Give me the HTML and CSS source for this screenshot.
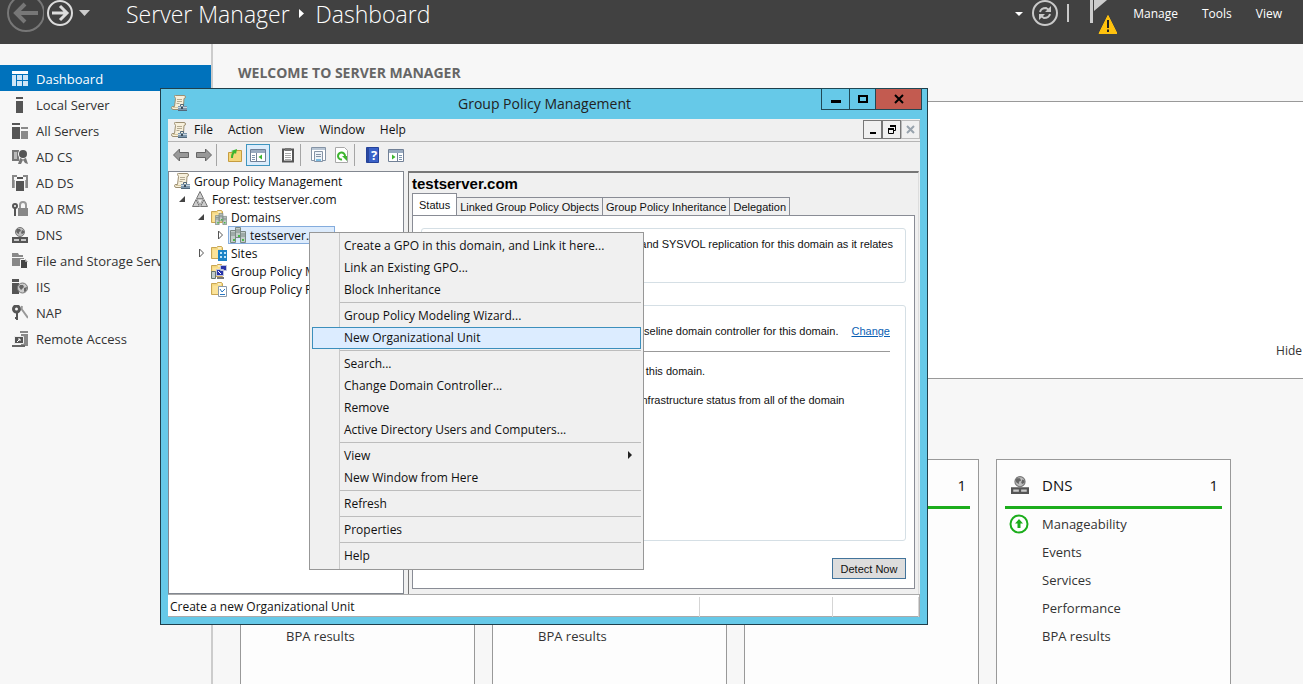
FILE: index.html
```
<!DOCTYPE html>
<html lang="en">
<head>
    <meta charset="UTF-8">
    <meta name="viewport" content="width=device-width, initial-scale=1.0">
    <title>Server Manager</title>
    <link rel="stylesheet" href="styles.css">
</head>
<body>
    <!-- shared icons -->
    <svg class="sprite" aria-hidden="true">
        <symbol id="i-gpm" viewBox="0 0 16 16">
            <path d="M3.500 1.500 Q3 .5 4.500 .5 H13 Q14.500 .5 14.500 2 Q14.500 3.500 13 3.500 L12.500 11 Q12.500 14.500 10 14.500 H2 Q.5 14.500 .5 12.500 Q.5 11.500 2 11.500 H3.500 L4.500 3.500 Z" fill="#f7f0dc" stroke="#9c8f72"/>
            <path d="M6 4.500h5M6 6.500h5M5.500 8.500h3" stroke="#b5ab92"/>
            <path d="M2 12.500h5" stroke="#d6c89f"/>
            <rect x="7" y="11" width="9" height="5" fill="#7e98ad"/>
            <path d="M9.500 11V9.500h3V11" fill="none" stroke="#52687a"/>
            <path d="M7 15.500h9" stroke="#52687a"/>
            <path d="M7 12.500h9" stroke="#c7d5df"/>
            <rect x="10" y="12" width="2" height="2" fill="#3c4c58"/>
        </symbol>
        <symbol id="i-dns" viewBox="0 0 16 16">
            <circle cx="8" cy="5" r="4.500" fill="#bdbdbd" stroke="#777"/>
            <path d="M5 2l3 0 1 2-2 1v2l-2-1-1-2zM10 3l2 1v2l-2 1-1-1z" fill="#666"/>
            <path d="M0 10h16v6H0z" fill="#555"/>
            <path d="M2 12h5v2H2zM9 12h5v2H9z" fill="#c9c9c9"/>
        </symbol>
        <symbol id="i-folder" viewBox="0 0 16 16">
            <path d="M.5 2.500h5l1-1h4l1 1v11H.5z" fill="#f3d77f" stroke="#c9a654"/>
            <path d="M1.500 4.500h9v8.500h-9z" fill="#fbe39a"/>
            <path d="M7 3h3" stroke="#fff"/>
        </symbol>
        <symbol id="i-towers" viewBox="0 0 16 16">
            <path d="M5.500 .5h5v10h-5zM.5 3.500h5v12h-5zM10.500 4.500h5v11h-5z" fill="#c3cdcb" stroke="#7b8884"/>
            <path d="M6 3h4M6 5h4M1 6h4M1 8h4M11 7h4M11 9h4" stroke="#7b8884"/>
            <path d="M3 12h2v2H3zM12 12h2v2h-2zM8 8h2v2H8z" fill="#4cb84a"/>
        </symbol>
        <symbol id="i-up" viewBox="0 0 20 20">
            <circle cx="10" cy="10" r="8.500" fill="#fff" stroke="#1cad1c" stroke-width="2"/>
            <path d="M10 5l4 4.500h-2.500V14h-3V9.500H6z" fill="#1cad1c"/>
        </symbol>
    </svg>

    <header class="topbar">
        <button class="nav-button" aria-label="Back">
            <svg width="44" height="34"><circle cx="26" cy="13" r="18" fill="none" stroke="#777" stroke-width="2"/><path d="M38 13H16M25 4l-9 9 9 9" fill="none" stroke="#777" stroke-width="4"/></svg>
        </button>
        <button class="nav-button" aria-label="Forward">
            <svg width="32" height="34"><circle cx="16" cy="13" r="12" fill="none" stroke="#dcdcdc" stroke-width="2"/><path d="M8 13h15M16 6l7 7-7 7" fill="none" stroke="#dcdcdc" stroke-width="3"/></svg>
        </button>
        <button class="nav-button" aria-label="History">
            <svg width="16" height="34"><path d="M3 10h11l-5.500 6z" fill="#ccc"/></svg>
        </button>
        <h1 class="breadcrumb">
            Server Manager
            <svg width="26" height="28" viewBox="0 0 26 28"><path d="M9 9l5 4.500-5 4.500z" fill="#fff"/></svg>
            Dashboard
        </h1>
        <div class="top-actions">
            <button class="nav-button" aria-label="Refresh options"><svg width="16" height="34"><path d="M4 12h8l-4 4z" fill="#fff"/></svg></button>
            <button class="nav-button" aria-label="Refresh">
                <svg width="32" height="34"><circle cx="18" cy="13" r="12" fill="none" stroke="#c9c9c9" stroke-width="2"/><path d="M13 12q1-4 6-4l3 2M23 14q-1 4-6 4l-3-2" fill="none" stroke="#c9c9c9" stroke-width="2"/><path d="M24 6v6h-6zM12 20v-6h6z" fill="#c9c9c9"/></svg>
            </button>
            <span class="divider"></span>
            <button class="nav-button" aria-label="Notifications">
                <svg width="48" height="40"><path d="M21 0h3v23h-3zM25 0h13L25 11z" fill="#ccc"/><path d="M24.500 1v7" stroke="#414141"/><path d="M39 15.500l9 18H30z" fill="#ffc20e" stroke="#ffc20e" stroke-linejoin="round"/><path d="M39 20v8M39 29.500v2.500" stroke="#222" stroke-width="2"/></svg>
            </button>
            <nav class="top-menu">
                <button>Manage</button>
                <button>Tools</button>
                <button>View</button>
            </nav>
        </div>
    </header>

    <div class="layout">
        <nav class="sidebar">
            <a href="#" class="active"><svg class="icon"><path d="M0 0h16v3H0z" fill="#fff"/><path d="M0 4h4v11H0zM5 4h5v5H5zM11 4h5v5h-5zM5 10h5v5H5zM11 10h5v5h-5z" fill="#cfe6f7"/></svg>Dashboard</a>
            <a href="#"><svg class="icon"><path d="M4 0h7v2H4zM4 4h7v12H4z" fill="#555"/></svg>Local Server</a>
            <a href="#"><svg class="icon"><path d="M0 0h8v2H0zM0 4h8v12H0z" fill="#555"/><path d="M9 4h7v2H9zM9 8h7v8H9z" fill="#8a8a8a"/></svg>All Servers</a>
            <a href="#"><svg class="icon"><path d="M1 2h5v9H1z" fill="#bbb" stroke="#777" stroke-width="2"/><path d="M8 9h2l1 2 1-2h2l2 6-3-1-2-3-2 4-3 0z" fill="#777"/><circle cx="11" cy="5" r="5" fill="#f7f7f7"/><circle cx="11" cy="5" r="4" fill="#555"/></svg>AD CS</a>
            <a href="#"><svg class="icon"><path d="M0 0h5v2H2v11H0zM11 0h5v13h-2V2h-3z" fill="#888"/><path d="M2 5h1v8H2zM13 5h1v8h-1z" fill="#aaa"/><path d="M5 2h6v2H5zM4 6h8v10H4z" fill="#555"/></svg>AD DS</a>
            <a href="#"><svg class="icon"><path d="M8 7V4q0-3 3-3t3 3v3" fill="none" stroke="#999" stroke-width="2"/><path d="M6 7h10v8H6z" fill="#888"/><circle cx="3" cy="5" r="2" fill="none" stroke="#555" stroke-width="2"/><path d="M3 7v8" stroke="#555" stroke-width="2"/></svg>AD RMS</a>
            <a href="#"><svg class="icon"><use href="#i-dns"/></svg>DNS</a>
            <a href="#"><svg class="icon"><path d="M0 0h6l1 2h4v2H0zM0 5h12v8H0z" fill="#888"/><path d="M8.500 6.500h5l2 2v7h-7z" fill="#444" stroke="#f7f7f7"/><path d="M13 6v3h3z" fill="#999"/></svg>File and Storage Services</a>
            <a href="#"><svg class="icon"><path d="M0 0h7v3H0zM0 4h7v11H0z" fill="#555"/><circle cx="10.500" cy="9" r="5" fill="#ccc" stroke="#777"/><path d="M8 6l3 0 1 2-3 3-2-3zM12 9l3-1-1 4-2 1z" fill="#666"/></svg>IIS</a>
            <a href="#"><svg class="icon"><circle cx="4.500" cy="4" r="3" fill="none" stroke="#555" stroke-width="3"/><path d="M5 7v8M4 13h-1" stroke="#555" stroke-width="2"/><path d="M10 1q-1 4 1 5l5 7" fill="none" stroke="#999" stroke-width="2"/></svg>NAP</a>
            <a href="#"><svg class="icon"><path d="M8 0h8v2H8zM9 3h7v12H9z" fill="#888"/><path d="M2.500 5.500h9v7h-9z" fill="#555" stroke="#eee"/><path d="M0 14h13v2H0z" fill="#666"/><path d="M5 11l3-3M6 8h2v2" fill="none" stroke="#fff"/></svg>Remote Access</a>
        </nav>

        <main class="content">
            <h2 class="welcome-title">WELCOME TO SERVER MANAGER</h2>
            <section class="welcome-panel">
                <button class="hide-button">Hide</button>
            </section>
            <section class="cards">
                <article class="card">
                    <h3><span>AD CS</span><span>1</span></h3>
                    <ul>
                        <li><svg class="status"><use href="#i-up"/></svg>Manageability</li>
                        <li>Events</li>
                        <li>Services</li>
                        <li>Performance</li>
                        <li>BPA results</li>
                    </ul>
                </article>
                <article class="card">
                    <h3><span>AD DS</span><span>1</span></h3>
                    <ul>
                        <li><svg class="status"><use href="#i-up"/></svg>Manageability</li>
                        <li>Events</li>
                        <li>Services</li>
                        <li>Performance</li>
                        <li>BPA results</li>
                    </ul>
                </article>
                <article class="card">
                    <h3><span>AD RMS</span><span>1</span></h3>
                    <ul>
                        <li><svg class="status"><use href="#i-up"/></svg>Manageability</li>
                        <li>Events</li>
                        <li>Services</li>
                        <li>Performance</li>
                    </ul>
                </article>
                <article class="card">
                    <h3><svg class="card-icon"><use href="#i-dns"/></svg><span>DNS</span><span>1</span></h3>
                    <ul>
                        <li><svg class="status"><use href="#i-up"/></svg>Manageability</li>
                        <li>Events</li>
                        <li>Services</li>
                        <li>Performance</li>
                        <li>BPA results</li>
                    </ul>
                </article>
            </section>
        </main>
    </div>

    <section class="window" aria-label="Group Policy Management">
        <div class="titlebar">
            <svg class="icon"><use href="#i-gpm"/></svg>
            <h2>Group Policy Management</h2>
            <div class="window-buttons">
                <button aria-label="Minimize"><svg width="12" height="12"><path d="M1 7h10v3H1z"/></svg></button>
                <button aria-label="Maximize"><svg width="12" height="12"><path d="M2 3h8v6H2z" fill="none" stroke="#000" stroke-width="2"/></svg></button>
                <button class="close" aria-label="Close"><svg width="12" height="12"><path d="M2 2l8 8M10 2l-8 8" stroke="#000" stroke-width="2"/></svg></button>
            </div>
        </div>

        <div class="client">
            <div class="menubar">
                <svg class="icon"><use href="#i-gpm"/></svg>
                <button>File</button>
                <button>Action</button>
                <button>View</button>
                <button>Window</button>
                <button>Help</button>
                <div class="mdi-buttons">
                    <button aria-label="Minimize child"><svg width="10" height="10"><path d="M2 7h6v2H2z"/></svg></button>
                    <button aria-label="Restore child"><svg width="10" height="10"><path d="M3.500 .5h5v5H7M1.500 4.500h5v4h-5z" fill="none" stroke="#000"/><path d="M3 1h6M1 4h6" stroke="#000" stroke-width="2"/></svg></button>
                    <button aria-label="Close child" disabled><svg width="10" height="10"><path d="M1 1l7 7M8 1L1 8" stroke="#98a3ad" stroke-width="2"/></svg></button>
                </div>
            </div>

            <div class="toolbar">
                <button aria-label="Back"><svg class="icon"><path d="M.5 8l6-6v3.500h9v5h-9V14z" fill="#999" stroke="#666"/></svg></button>
                <button aria-label="Forward"><svg class="icon"><path d="M15.500 8l-6-6v3.500h-9v5h9V14z" fill="#999" stroke="#666"/></svg></button>
                <span class="tool-divider"></span>
                <button aria-label="Up one level"><svg class="icon"><path d="M1.500 5.500h6l1-2h6v11h-13z" fill="#f5d67a" stroke="#c69c3f"/><path d="M4 11q0-5 2-6L4 4l6-2-1 5-1-1Q6 7 6 11z" fill="#3db52f"/></svg></button>
                <button class="pressed" aria-label="Console tree"><svg class="icon"><path d="M.5 2.500h15v12H.5z" fill="#fff" stroke="#718096"/><path d="M1 4.500h14" stroke="#9aabc0" stroke-width="3"/><path d="M6.500 6v8" stroke="#718096"/><path d="M2 8.500h3M2 10.500h3M2 12.500h3" stroke="#7d94ad"/><path d="M12 7.500v5L8.500 10z" fill="#3db52f"/></svg></button>
                <button aria-label="Paste"><svg class="icon"><path d="M3 2.500h10v12H3z" fill="#fff" stroke="#555" stroke-width="2"/><path d="M5 6.500h6M5 8.500h6M5 10.500h6M5 12.500h6" stroke="#aaa"/><path d="M5 1h6v3H5z" fill="#777"/></svg></button>
                <span class="tool-divider"></span>
                <button aria-label="Properties"><svg class="icon"><path d="M.5 .5h14v13H.5z" fill="#fff" stroke="#8593a5"/><path d="M1 2h13" stroke="#b9c6d4" stroke-width="2"/><path d="M3.500 4.500h8v10h-8z" fill="#eef3f8" stroke="#8593a5"/><path d="M5 7.500h5M5 9.500h5" stroke="#8593a5"/><path d="M5 13h5" stroke="#7bbbe0" stroke-width="2"/></svg></button>
                <button aria-label="Refresh"><svg class="icon"><path d="M1.500 .5h9l3 3v12h-12z" fill="#fff" stroke="#a8a8a8"/><path d="M8 12.500A3.500 3.500 0 1 1 11 9" fill="none" stroke="#3db52f" stroke-width="2"/><path d="M8 9h5v5z" fill="#3db52f"/></svg></button>
                <span class="tool-divider"></span>
                <button aria-label="Help"><svg class="icon"><path d="M1.500 .5h12v15h-12z" fill="#3b62c8" stroke="#24429a"/><path d="M2 1h2v14H2z" fill="#2a489f"/><text x="9" y="13" class="help-mark">?</text></svg></button>
                <button aria-label="Action pane"><svg class="icon"><path d="M.5 2.500h15v12H.5z" fill="#fff" stroke="#718096"/><path d="M1 4.500h14" stroke="#9aabc0" stroke-width="3"/><path d="M9.500 6v8" stroke="#718096"/><path d="M11 8.500h3M11 10.500h3M11 12.500h3" stroke="#7d94ad"/><path d="M4 7.500v5L7.500 10z" fill="#3db52f"/></svg></button>
            </div>

            <div class="panes">
                <ul class="tree">
                    <li class="root"><svg class="icon"><use href="#i-gpm"/></svg>Group Policy Management</li>
                    <li class="level-1"><svg class="twisty"><path d="M1 8h6V2z" fill="#444"/></svg><svg class="icon"><path d="M8 .5l3.500 7h-7zM4 8.500l3.500 7h-7zM12 8.500l3.500 7h-7z" fill="#ccc" stroke="#777"/><path d="M5 8h6l-3 6z" fill="#eee" stroke="#999"/></svg>Forest: testserver.com</li>
                    <li class="level-2"><svg class="twisty"><path d="M1 8h6V2z" fill="#444"/></svg><svg class="icon"><use href="#i-folder"/><use href="#i-towers" x="4" y="4" width="12" height="12"/></svg>Domains</li>
                    <li class="level-3"><svg class="twisty"><path d="M2.500 1l4 4-4 4z" fill="#fff" stroke="#555"/></svg><span class="selected"><svg class="icon"><use href="#i-towers"/></svg>testserver.com</span></li>
                    <li class="level-2"><svg class="twisty"><path d="M2.500 1l4 4-4 4z" fill="#fff" stroke="#555"/></svg><svg class="icon"><use href="#i-folder"/><path d="M7 5h9v11H7z" fill="#1c83c6"/><path d="M9 7h2v2H9zM13 7h2v2h-2zM9 11h2v2H9zM13 11h2v2h-2z" fill="#bfe5fa"/></svg>Sites</li>
                    <li class="level-2"><svg class="twisty"></svg><svg class="icon"><use href="#i-folder"/><path d="M.5 8.500h4v7h-4z" fill="#c3cdcb" stroke="#66736f"/><path d="M9.500 2.500h6v5h-6zM5.500 6.500h7v6h-7z" fill="#2733a8" stroke="#c0c4d8"/><path d="M6 15h7" stroke="#777" stroke-width="2"/><path d="M7 8l3 3" stroke="#fff"/></svg>Group Policy Modeling</li>
                    <li class="level-2"><svg class="twisty"></svg><svg class="icon"><use href="#i-folder"/><path d="M7.500 5.500h8v10h-8z" fill="#fff" stroke="#8b9aab"/><path d="M9 8l2 3 3-3M9 13.500h5" fill="none" stroke="#2a78c2"/></svg>Group Policy Results</li>
                </ul>

                <div class="details">
                    <h3>testserver.com</h3>
                    <div class="tabs" role="tablist">
                        <button class="tab current" role="tab">Status</button>
                        <button class="tab" role="tab">Linked Group Policy Objects</button>
                        <button class="tab" role="tab">Group Policy Inheritance</button>
                        <button class="tab" role="tab">Delegation</button>
                    </div>
                    <div class="tab-page">
                        <div class="group about">
                            <p>This page shows the status of Active Directory and SYSVOL replication for this domain as it relates<br>to Group Policy.</p>
                        </div>
                        <div class="group result">
                            <p class="baseline"><span>DC.testserver.com is the baseline domain controller for this domain.</span><a href="#">Change</a></p>
                            <p>No Infrastructure Status information exists for this domain.</p>
                            <p>Click the Detect Now button below to gather infrastructure status from all of the domain<br>controllers in this domain.</p>
                        </div>
                        <button class="detect">Detect Now</button>
                    </div>
                </div>
            </div>

            <div class="statusbar">
                <span>Create a new Organizational Unit</span>
                <span></span>
                <span></span>
            </div>
        </div>

        <div class="context-menu" role="menu">
            <button role="menuitem">Create a GPO in this domain, and Link it here...</button>
            <button role="menuitem">Link an Existing GPO...</button>
            <button role="menuitem">Block Inheritance</button>
            <hr>
            <button role="menuitem">Group Policy Modeling Wizard...</button>
            <button role="menuitem" class="hot">New Organizational Unit</button>
            <hr>
            <button role="menuitem">Search...</button>
            <button role="menuitem">Change Domain Controller...</button>
            <button role="menuitem">Remove</button>
            <button role="menuitem">Active Directory Users and Computers...</button>
            <hr>
            <button role="menuitem">View<svg width="6" height="8"><path d="M1 0l4 4-4 4z" fill="#222"/></svg></button>
            <button role="menuitem">New Window from Here</button>
            <hr>
            <button role="menuitem">Refresh</button>
            <hr>
            <button role="menuitem">Properties</button>
            <hr>
            <button role="menuitem">Help</button>
        </div>
    </section>
</body>
</html>
```
FILE: styles.css
```
* {
    box-sizing: border-box;
}

body {
    margin: 0;
    height: 100vh;
    display: flex;
    flex-direction: column;
    overflow: hidden;
    position: relative;
    background: #f7f7f7;
    color: #333;
    font-family: "Open Sans", "Noto Sans", sans-serif;
    font-size: 12px;
}

h1, h2, h3, p, ul {
    margin: 0;
    padding: 0;
    font-weight: normal;
    list-style: none;
}

button {
    padding: 0;
    border: none;
    background: none;
    color: inherit;
    font: inherit;
}

svg {
    display: block;
    flex: none;
}

.sprite {
    position: absolute;
    width: 0;
    height: 0;
}

.icon {
    width: 16px;
    height: 16px;
}

/* top bar */
.topbar {
    display: flex;
    align-items: flex-start;
    flex: none;
    height: 44px;
    background: #414141;
    color: #fff;
}

.breadcrumb {
    display: flex;
    margin-left: 34px;
    font-size: 23px;
    font-weight: 300;
    line-height: 28px;
}

.top-actions {
    display: flex;
    align-items: flex-start;
    margin-left: auto;
    padding-right: 21px;
}

.divider {
    width: 2px;
    height: 18px;
    margin: 4px 0 0 8px;
    background: #c9c9c9;
}

.top-menu {
    display: flex;
    gap: 24px;
    margin-left: 16px;
    line-height: 28px;
}

/* server manager page */
.layout {
    display: flex;
    flex: 1;
    min-height: 0;
}

.sidebar {
    flex: none;
    width: 213px;
    padding-top: 21px;
    border-right: 2px solid #ccc;
}

.sidebar a {
    display: flex;
    align-items: center;
    gap: 8px;
    height: 26px;
    padding: 2px 0 0 12px;
    overflow: hidden;
    color: #333;
    font-size: 13px;
    white-space: nowrap;
    text-decoration: none;
}

.sidebar a.active {
    background: #0072bc;
    color: #fff;
}

.content {
    display: flex;
    flex: 1;
    flex-direction: column;
    min-width: 0;
    padding-left: 25px;
}

.welcome-title {
    padding-top: 18px;
    color: #666;
    font-size: 14px;
    font-weight: bold;
    line-height: 22px;
}

.welcome-panel {
    display: flex;
    flex: none;
    justify-content: flex-end;
    align-items: flex-end;
    height: 278px;
    margin-top: 17px;
    padding: 0 1px 18px 0;
    border: 1px solid #999;
    border-right: none;
    background: #fff;
}

.hide-button {
    line-height: 18px;
}

.cards {
    display: grid;
    flex: 1;
    grid-template-columns: repeat(4, 235px);
    gap: 17px;
    min-height: 0;
    padding: 80px 0 0 2px;
}

.card {
    padding: 6px 8px 0;
    border: 1px solid #999;
    border-bottom: none;
    background: #fdfdfd;
}

.card h3 {
    display: flex;
    align-items: center;
    height: 43px;
    padding: 0 4px 2px 6px;
    border-bottom: 3px solid #1cad1c;
    color: #111;
    font-size: 15px;
}

.card-icon {
    width: 18px;
    height: 20px;
    margin-right: 13px;
}

.card h3 span:last-child {
    margin-left: auto;
}

.card li {
    display: flex;
    align-items: center;
    height: 28px;
    padding-left: 37px;
    font-size: 13px;
}

.status {
    width: 20px;
    height: 20px;
    margin: 0 13px 0 -33px;
}

.card li:first-child {
    margin-top: 1px;
}

/* group policy window */
.window {
    position: absolute;
    left: 160px;
    top: 88px;
    display: flex;
    flex-direction: column;
    width: 768px;
    height: 537px;
    padding: 0 7px 7px;
    border: 1px solid #1f3f4b;
    background: #66c9e8;
    color: #111;
}

.titlebar {
    display: flex;
    flex: none;
    height: 30px;
    padding: 6px 0 0 3px;
}

.titlebar h2 {
    flex: 1;
    padding-left: 80px;
    color: #222;
    font-size: 14px;
    line-height: 18px;
    text-align: center;
}

.window-buttons {
    display: flex;
    margin: -7px -2px 0 0;
}

.window-buttons button {
    display: flex;
    align-items: center;
    justify-content: center;
    width: 27px;
    height: 22px;
    margin-left: -1px;
    border: 1px solid #204855;
}

.window-buttons button:first-child {
    width: 29px;
}

.window-buttons .close {
    width: 47px;
    background: #c35b50;
}

.client {
    display: flex;
    flex: 1;
    flex-direction: column;
    min-height: 0;
    background: #f0f0f0;
}

.menubar {
    display: flex;
    align-items: center;
    flex: none;
    gap: 15px;
    height: 23px;
    padding: 0 0 1px 3px;
    border-bottom: 1px solid #b5b5b5;
}

.menubar .icon {
    margin-right: -8px;
}

.mdi-buttons {
    display: flex;
    margin-left: auto;
}

.mdi-buttons button {
    display: flex;
    align-items: center;
    justify-content: center;
    width: 19px;
    height: 19px;
    border: 1px solid #777;
}

.mdi-buttons button:disabled {
    border-color: #bbb;
}

.toolbar {
    display: flex;
    align-items: center;
    flex: none;
    height: 29px;
    padding: 0 0 4px 1px;
}

.toolbar button {
    display: flex;
    align-items: center;
    justify-content: center;
    width: 23px;
    height: 22px;
}

.toolbar .pressed {
    width: 24px;
    border: 1px solid #3f95bf;
    background: #dcecfb;
}

.toolbar .pressed + button {
    margin-left: 6px;
}

.tool-divider {
    width: 1px;
    height: 22px;
    margin: 0 6px 0 1px;
    background: #a5a5a5;
}

.help-mark {
    fill: #fff;
    font-size: 13px;
    font-weight: bold;
    text-anchor: middle;
}

.panes {
    display: flex;
    flex: 1;
    gap: 4px;
    min-height: 0;
}

.tree {
    flex: none;
    width: 236px;
    border: 1px solid #828790;
    background: #fff;
}

.tree li {
    display: flex;
    align-items: center;
    gap: 4px;
    height: 18px;
    white-space: nowrap;
}

.tree .root {
    padding-left: 5px;
}

.tree .level-1 {
    padding-left: 9px;
}

.tree .level-2 {
    padding-left: 28px;
}

.tree .level-3 {
    padding-left: 47px;
}

.twisty {
    width: 10px;
    height: 10px;
}

.selected {
    display: flex;
    align-items: center;
    gap: 4px;
    width: 107px;
    height: 18px;
    margin-left: -2px;
    padding-left: 1px;
    border: 1px solid #84acdd;
    background: #dcebfc;
}

.details {
    display: flex;
    flex: 1;
    flex-direction: column;
    min-width: 0;
    margin-right: 1px;
    padding: 2px 3px 5px;
    border-top: 2px solid #777;
    border-left: 1px solid #777;
    border-right: 1px solid #ddd;
    font-family: "Liberation Sans", Arial, sans-serif;
    font-size: 11px;
}

.details h3 {
    color: #000;
    font-size: 15px;
    font-weight: bold;
    line-height: 18px;
}

.tabs {
    display: flex;
    align-items: flex-end;
    margin-bottom: -1px;
}

.tab {
    height: 19px;
    padding: 0 3px;
    border: 1px solid #898c95;
    margin-left: -1px;
    white-space: nowrap;
}

.tab.current {
    height: 23px;
    margin-left: 0;
    padding: 0 6px;
    border-bottom: none;
    background: #fff;
}

.tab-page {
    display: flex;
    flex: 1;
    flex-direction: column;
    padding: 12px 8px 9px;
    border: 1px solid #898c95;
    background: #fff;
}

.group {
    border: 1px solid #d5dfe5;
    border-radius: 3px;
}

.group p {
    line-height: 15px;
    white-space: nowrap;
}

.about {
    display: flex;
    justify-content: flex-end;
    height: 55px;
    padding: 8px 12px 8px 0;
}

.result {
    height: 236px;
    margin-top: 22px;
    padding: 18px 15px 0 0;
}

.result p {
    margin-bottom: 14px;
}

.result .baseline {
    display: flex;
    justify-content: flex-end;
    gap: 13px;
    margin-bottom: 12px;
    padding-bottom: 12px;
    border-bottom: 1px solid #999;
}

.result a {
    color: #0a5fb4;
}

.detect {
    align-self: flex-end;
    width: 74px;
    height: 21px;
    margin-top: auto;
    border: 1px solid #43749b;
    background: #ddd;
}

.statusbar {
    display: grid;
    grid-template-columns: 1fr 133px 86px;
    flex: none;
    height: 23px;
    padding: 2px 0;
    border: 1px solid #aaa;
    border-left: none;
    background: #fff;
    line-height: 20px;
}

.statusbar span {
    padding-left: 2px;
    border-right: 1px solid #d5d5d5;
}

/* right-click menu */
.context-menu {
    position: absolute;
    left: 148px;
    top: 143px;
    width: 335px;
    padding: 2px;
    border: 1px solid #979797;
    background: linear-gradient(#c9c9c9, #c9c9c9) 29px 0 / 1px 100% no-repeat #f0f0f0;
}

.context-menu button {
    display: flex;
    align-items: center;
    justify-content: space-between;
    width: 100%;
    height: 22px;
    padding: 0 7px 2px 31px;
    border: 1px solid transparent;
}

.context-menu .hot {
    border-color: #3c8fbc;
    background: #dcecff;
}

.context-menu hr {
    height: 1px;
    margin: 1px 0 2px 28px;
    border: none;
    background: #bdbdbd;
}
```
